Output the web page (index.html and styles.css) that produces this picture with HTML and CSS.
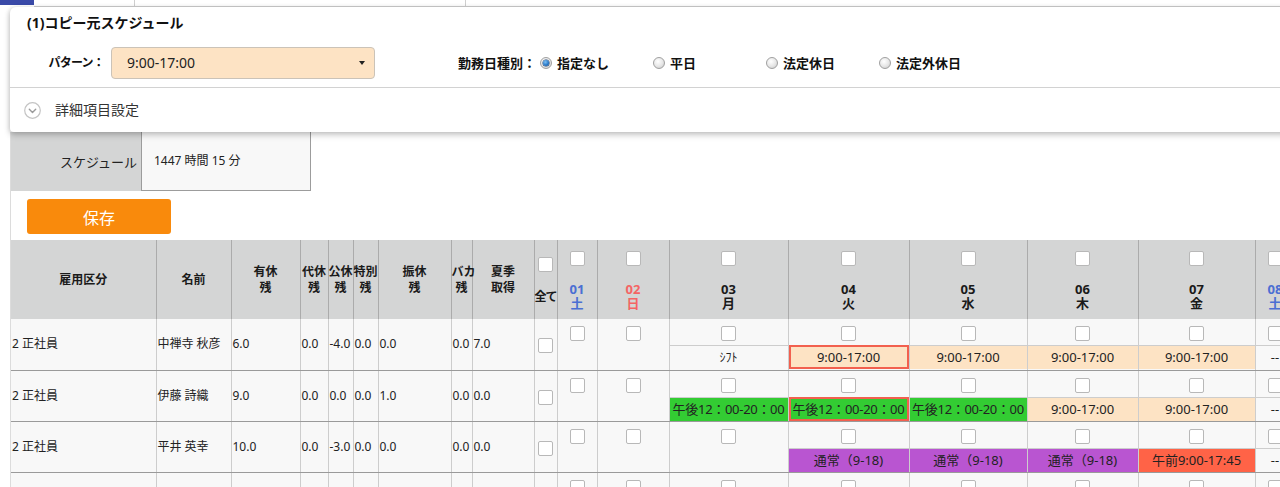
FILE: index.html
```html
<!DOCTYPE html>
<html lang="ja">
<head>
<meta charset="utf-8">
<title>スケジュールコピー</title>
<link rel="stylesheet" href="styles.css">
</head>
<body>
<div class="topbar">
  <span class="tab tab-active"></span>
  <span class="tab tab-2"></span>
  <span class="tab tab-3"></span>
  <span class="tab tab-rest"></span>
</div>

<section class="panel">
  <h2 class="panel-title">(1)コピー元スケジュール</h2>
  <div class="panel-form">
    <span class="field-label">パターン：</span>
    <div class="select"><span class="select-text">9:00-17:00</span><span class="caret"></span></div>
    <span class="field-label2">勤務日種別：</span>
    <div class="radios">
      <span class="radio-item"><span class="radio checked"></span>指定なし</span>
      <span class="radio-item"><span class="radio"></span>平日</span>
      <span class="radio-item"><span class="radio"></span>法定休日</span>
      <span class="radio-item"><span class="radio"></span>法定外休日</span>
    </div>
  </div>
  <div class="panel-detail">
    <svg class="detail-icon" width="17" height="17" viewBox="0 0 17 17"><circle cx="8.5" cy="8.5" r="7.8" fill="#fff" stroke="#c4c4c4" stroke-width="1.2"/><path d="M5.3 7.2 L8.5 10.4 L11.7 7.2" fill="none" stroke="#9a9a9a" stroke-width="1.4" stroke-linecap="round" stroke-linejoin="round"/></svg>
    <span>詳細項目設定</span>
  </div>
</section>

<main class="content">
  <div class="summary">
    <div class="summary-label">スケジュール</div>
    <div class="summary-value">1447 時間 15 分</div>
  </div>
  <button class="btn-save" type="button">保存</button>

  <table class="grid">
    <colgroup>
      <col class="w-kbn"><col class="w-name"><col class="w-yu"><col class="w-dai"><col class="w-kou"><col class="w-toku"><col class="w-furi"><col class="w-vac"><col class="w-natsu"><col class="w-all">
      <col class="w-d01"><col class="w-d02"><col class="w-d03"><col class="w-d04"><col class="w-d05"><col class="w-d06"><col class="w-d07"><col class="w-d08">
    </colgroup>
    <thead>
      <tr>
        <th>雇用区分</th>
        <th>名前</th>
        <th>有休<br>残</th>
        <th>代休<br>残</th>
        <th>公休<br>残</th>
        <th>特別<br>残</th>
        <th>振休<br>残</th>
        <th>バカ<br>残</th>
        <th>夏季<br>取得</th>
        <th class="allhead"><span class="cb"></span><div class="alltext">全て</div></th>
        <th class="dayhead sat"><span class="cb"></span><div class="dnum">01<br>土</div></th>
        <th class="dayhead sun"><span class="cb"></span><div class="dnum">02<br>日</div></th>
        <th class="dayhead"><span class="cb"></span><div class="dnum">03<br>月</div></th>
        <th class="dayhead"><span class="cb"></span><div class="dnum">04<br>火</div></th>
        <th class="dayhead"><span class="cb"></span><div class="dnum">05<br>水</div></th>
        <th class="dayhead"><span class="cb"></span><div class="dnum">06<br>木</div></th>
        <th class="dayhead"><span class="cb"></span><div class="dnum">07<br>金</div></th>
        <th class="dayhead sat"><span class="cb"></span><div class="dnum">08<br>土</div></th>
      </tr>
    </thead>
    <tbody>
      <tr>
        <td>2 正社員</td><td>中禅寺 秋彦</td><td>6.0</td><td>0.0</td><td>-4.0</td><td>0.0</td><td>0.0</td><td>0.0</td><td>7.0</td>
        <td class="allcell"><span class="cb"></span></td>
        <td class="daycell"><div class="day-top"><span class="cb"></span></div></td>
        <td class="daycell"><div class="day-top"><span class="cb"></span></div></td>
        <td class="daycell"><div class="day-top"><span class="cb"></span></div><div class="shift small">ｼﾌﾄ</div></td>
        <td class="daycell"><div class="day-top"><span class="cb"></span></div><div class="shift peach sel">9:00-17:00</div></td>
        <td class="daycell"><div class="day-top"><span class="cb"></span></div><div class="shift peach">9:00-17:00</div></td>
        <td class="daycell"><div class="day-top"><span class="cb"></span></div><div class="shift peach">9:00-17:00</div></td>
        <td class="daycell"><div class="day-top"><span class="cb"></span></div><div class="shift peach">9:00-17:00</div></td>
        <td class="daycell"><div class="day-top"><span class="cb"></span></div><div class="shift">--</div></td>
      </tr>
      <tr>
        <td>2 正社員</td><td>伊藤 詩織</td><td>9.0</td><td>0.0</td><td>0.0</td><td>0.0</td><td>1.0</td><td>0.0</td><td>0.0</td>
        <td class="allcell"><span class="cb"></span></td>
        <td class="daycell"><div class="day-top"><span class="cb"></span></div></td>
        <td class="daycell"><div class="day-top"><span class="cb"></span></div></td>
        <td class="daycell"><div class="day-top"><span class="cb"></span></div><div class="shift green">午後12：00-20：00</div></td>
        <td class="daycell"><div class="day-top"><span class="cb"></span></div><div class="shift green sel">午後12：00-20：00</div></td>
        <td class="daycell"><div class="day-top"><span class="cb"></span></div><div class="shift green">午後12：00-20：00</div></td>
        <td class="daycell"><div class="day-top"><span class="cb"></span></div><div class="shift peach">9:00-17:00</div></td>
        <td class="daycell"><div class="day-top"><span class="cb"></span></div><div class="shift peach">9:00-17:00</div></td>
        <td class="daycell"><div class="day-top"><span class="cb"></span></div><div class="shift">--</div></td>
      </tr>
      <tr>
        <td>2 正社員</td><td>平井 英幸</td><td>10.0</td><td>0.0</td><td>-3.0</td><td>0.0</td><td>0.0</td><td>0.0</td><td>0.0</td>
        <td class="allcell"><span class="cb"></span></td>
        <td class="daycell"><div class="day-top"><span class="cb"></span></div></td>
        <td class="daycell"><div class="day-top"><span class="cb"></span></div></td>
        <td class="daycell"><div class="day-top"><span class="cb"></span></div></td>
        <td class="daycell"><div class="day-top"><span class="cb"></span></div><div class="shift purple">通常（9-18)</div></td>
        <td class="daycell"><div class="day-top"><span class="cb"></span></div><div class="shift purple">通常（9-18)</div></td>
        <td class="daycell"><div class="day-top"><span class="cb"></span></div><div class="shift purple">通常（9-18)</div></td>
        <td class="daycell"><div class="day-top"><span class="cb"></span></div><div class="shift tomato">午前9:00-17:45</div></td>
        <td class="daycell"><div class="day-top"><span class="cb"></span></div><div class="shift">--</div></td>
      </tr>
      <tr>
        <td></td><td></td><td></td><td></td><td></td><td></td><td></td><td></td><td></td>
        <td class="allcell"><span class="cb"></span></td>
        <td class="daycell"><div class="day-top"><span class="cb"></span></div></td>
        <td class="daycell"><div class="day-top"><span class="cb"></span></div></td>
        <td class="daycell"><div class="day-top"><span class="cb"></span></div></td>
        <td class="daycell"><div class="day-top"><span class="cb"></span></div></td>
        <td class="daycell"><div class="day-top"><span class="cb"></span></div></td>
        <td class="daycell"><div class="day-top"><span class="cb"></span></div></td>
        <td class="daycell"><div class="day-top"><span class="cb"></span></div></td>
        <td class="daycell"><div class="day-top"><span class="cb"></span></div></td>
      </tr>
    </tbody>
  </table>
</main>
</body>
</html>
```

FILE: styles.css
```css
* { box-sizing: border-box; }

html, body {
  margin: 0;
  padding: 0;
  background: #fff;
  overflow: hidden;
}

body {
  width: 1280px;
  height: 487px;
  font-family: "Noto Sans", "Noto Sans CJK JP", sans-serif;
  font-size: 12px;
  line-height: 16px;
  color: #222;
}

/* top tab strip */
.topbar {
  display: flex;
  height: 7px;
}
.tab {
  display: block;
  height: 7px;
  border-bottom: 1px solid #cfcfcf;
}
.tab-active {
  width: 34px;
  height: 5px;
  border: 0;
  background: #3a4aa8;
}
.tab-2 { width: 101px; border-right: 1px solid #cfcfcf; }
.tab-3 { width: 331px; border-right: 1px solid #cfcfcf; }
.tab-rest { flex: 1; }

/* floating copy-source panel */
.panel {
  position: relative;
  z-index: 2;
  margin-left: 10px;
  width: 1300px;
  height: 125px;
  background: #fff;
  border-radius: 6px 0 0 4px;
  box-shadow: 0 3px 6px rgba(0, 0, 0, 0.22), -1px 0 4px rgba(0, 0, 0, 0.1);
}
.panel-title {
  margin: 0;
  padding: 8px 0 0 17px;
  font-size: 14px;
  line-height: 16px;
  font-weight: bold;
  color: #111;
}
.panel-form {
  display: flex;
  align-items: center;
  margin-top: 16px;
  height: 41px;
  padding-bottom: 8px;
  border-bottom: 1px solid #d2d2d2;
}
.field-label {
  width: 94px;
  text-align: right;
  font-size: 12px;
  font-weight: bold;
  letter-spacing: -0.8px;
  color: #111;
}
.select {
  display: flex;
  align-items: center;
  justify-content: space-between;
  margin-left: 7px;
  width: 264px;
  height: 32px;
  padding: 0 9px 0 15px;
  background: #fde3c4;
  border: 1px solid #cbc3b8;
  border-radius: 4px;
  font-size: 14px;
  color: #222;
}
.caret {
  width: 0;
  height: 0;
  border-left: 3.5px solid transparent;
  border-right: 3.5px solid transparent;
  border-top: 4px solid #222;
}
.field-label2 {
  margin-left: 83px;
  font-size: 13px;
  font-weight: bold;
  color: #111;
}
.radios {
  display: flex;
  margin-left: 4px;
}
.radio-item {
  display: flex;
  align-items: center;
  width: 113px;
  font-size: 13px;
  font-weight: bold;
  color: #111;
}
.radio {
  position: relative;
  width: 12px;
  height: 12px;
  margin-right: 5px;
  border-radius: 50%;
  border: 1px solid #a0a0a0;
  background: radial-gradient(circle at 40% 35%, #ffffff 0%, #e6e6e6 55%, #c4c4c4 100%);
}
.radio.checked::after {
  content: "";
  position: absolute;
  left: 2px;
  top: 2px;
  width: 6px;
  height: 6px;
  border-radius: 50%;
  background: radial-gradient(circle at 40% 35%, #7cc0f4 0%, #2373c4 60%, #134f8e 100%);
  box-shadow: 0 0 0 0.5px #1b3c6a;
}
.panel-detail {
  display: flex;
  align-items: center;
  height: 44px;
  padding-left: 14px;
  font-size: 14px;
  color: #333;
}
.detail-icon {
  margin-right: 14px;
}

/* main content */
.content {
  margin-left: 10px;
  border-left: 1px solid #dcdcdc;
  height: 400px;
}
.summary {
  display: flex;
  height: 59px;
}
.summary-label {
  width: 130px;
  background: #d4d5d5;
  display: flex;
  align-items: center;
  justify-content: flex-end;
  padding-right: 4px;
  font-size: 13px;
  color: #222;
}
.summary-value {
  width: 170px;
  display: flex;
  align-items: center;
  padding-left: 12px;
  background: #f8f8f8;
  border: 1px solid #9c9c9c;
  border-top: 0;
  font-size: 12px;
  color: #222;
}
.btn-save {
  display: block;
  margin: 8px 0 0 16px;
  width: 144px;
  height: 35px;
  padding: 0;
  background: #f98a0c;
  border: 0;
  border-radius: 3px;
  color: #fff;
  font-family: inherit;
  font-size: 16px;
}

/* schedule grid */
.grid {
  margin-top: 6px;
  border-collapse: collapse;
  table-layout: fixed;
  width: 1284px;
}
.w-kbn { width: 145px; }
.w-name { width: 75px; }
.w-yu { width: 69px; }
.w-dai { width: 28px; }
.w-kou { width: 25px; }
.w-toku { width: 25px; }
.w-furi { width: 73px; }
.w-vac { width: 21px; }
.w-natsu { width: 62px; }
.w-all { width: 23px; }
.w-d01 { width: 40px; }
.w-d02 { width: 72px; }
.w-d03 { width: 119px; }
.w-d04 { width: 121px; }
.w-d05 { width: 118px; }
.w-d06 { width: 111px; }
.w-d07 { width: 117px; }
.w-d08 { width: 40px; }

.grid th {
  height: 79px;
  padding: 0;
  background: #d4d5d5;
  border-right: 1px solid #ababab;
  font-size: 12px;
  line-height: 16px;
  font-weight: bold;
  text-align: center;
  vertical-align: middle;
  color: #1a1a1a;
  white-space: nowrap;
}
.grid td {
  height: 51px;
  padding: 0 0 0 1px;
  background: #f8f8f8;
  border-right: 1px solid #cdcdcd;
  border-bottom: 1px solid #9a9a9a;
  vertical-align: middle;
  white-space: nowrap;
  font-size: 12px;
  color: #222;
}

.cb {
  display: inline-block;
  width: 15px;
  height: 15px;
  background: #fff;
  border: 1px solid #b8b8b8;
  border-radius: 2px;
  vertical-align: top;
}

.grid th.allhead {
  vertical-align: top;
  padding-top: 17px;
}
.alltext {
  margin-top: 17px;
  line-height: 14px;
  letter-spacing: -1px;
}
.grid th.dayhead {
  vertical-align: top;
  padding-top: 11px;
}
.dnum {
  margin-top: 15px;
  font-size: 13px;
  line-height: 14px;
}
.sat .dnum { color: #4b6fd3; }
.sun .dnum { color: #f46464; }

.grid td.allcell {
  padding: 4px 0 0;
  text-align: center;
}
.grid td.daycell {
  padding: 0;
  vertical-align: top;
}
.day-top {
  height: 26px;
  padding-top: 7px;
  text-align: center;
}
.shift {
  height: 24px;
  border-top: 1px solid #cdcdcd;
  font-size: 13px;
  line-height: 23px;
  text-align: center;
  color: #222;
  white-space: nowrap;
}
.shift.small { font-size: 12px; }
.shift.sel {
  outline: 2px solid #f2604f;
  outline-offset: -2px;
}
.peach { background: #fde3c4; }
.green { background: #33cc33; letter-spacing: -0.3px; }
.purple { background: #b955d1; }
.tomato { background: #ff6347; }
```
